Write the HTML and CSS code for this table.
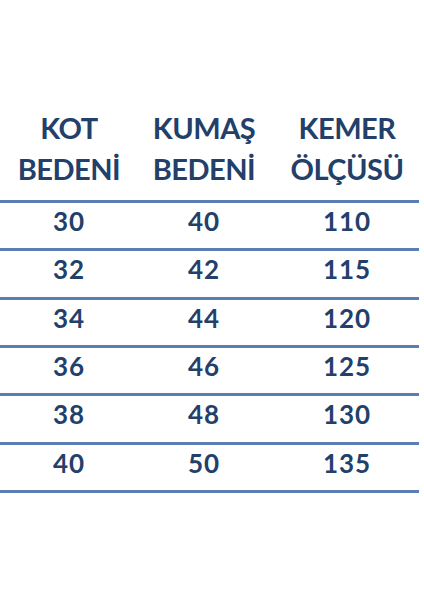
FILE: index.html
```html
<!DOCTYPE html>
<html lang="tr">
<head>
<meta charset="utf-8">
<link rel="stylesheet" href="styles.css">
</head>
<body>
<div class="chart">
  <div class="head">
    <div class="cell c1">KOT<br>BEDENİ</div>
    <div class="cell c2">KUMAŞ<br>BEDENİ</div>
    <div class="cell c3">KEMER<br>ÖLÇÜSÜ</div>
  </div>
  <div class="row"><div class="cell c1">30</div><div class="cell c2">40</div><div class="cell c3">110</div></div>
  <div class="row"><div class="cell c1">32</div><div class="cell c2">42</div><div class="cell c3">115</div></div>
  <div class="row"><div class="cell c1">34</div><div class="cell c2">44</div><div class="cell c3">120</div></div>
  <div class="row"><div class="cell c1">36</div><div class="cell c2">46</div><div class="cell c3">125</div></div>
  <div class="row"><div class="cell c1">38</div><div class="cell c2">48</div><div class="cell c3">130</div></div>
  <div class="row last"><div class="cell c1">40</div><div class="cell c2">50</div><div class="cell c3">135</div></div>
</div>
</body>
</html>
```
FILE: styles.css
```css
html, body {
  margin: 0;
  padding: 0;
  background: #ffffff;
}
body {
  font-family: Lato, "Open Sans", sans-serif;
  font-weight: 700;
  color: #22406a;
}
.chart {
  width: 419px;
  padding-top: 107px;
}
.head {
  display: grid;
  grid-template-columns: 138px 132px 149px;
  font-size: 29px;
  line-height: 41px;
  letter-spacing: -0.5px;
  padding-bottom: 11px;
  text-align: center;
}
.row {
  display: grid;
  grid-template-columns: 138px 132px 149px;
  border-top: 3px solid #5a7db3;
  height: 45.33px;
  font-size: 26px;
  line-height: 36px;
  letter-spacing: 1px;
  text-align: center;
}
.row.last {
  border-bottom: 3px solid #5a7db3;
}
.cell {
  text-align: center;
}
.cell.c3 {
  padding-left: 5px;
}
```
